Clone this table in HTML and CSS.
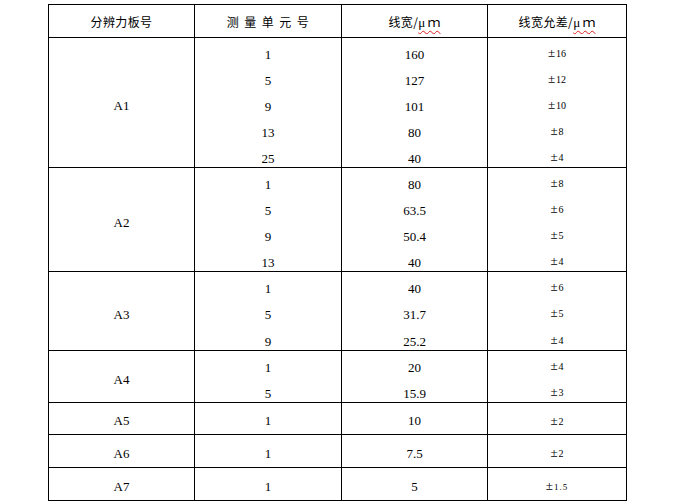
FILE: index.html
```html
<!DOCTYPE html>
<html lang="zh-CN">
<head>
<meta charset="utf-8">
<title>分辨力板线宽</title>
<link rel="stylesheet" href="styles.css">
</head>
<body>
<table class="spec">
  <colgroup>
    <col class="c1"><col class="c2"><col class="c3"><col class="c4">
  </colgroup>
  <thead>
    <tr class="head">
      <th>分辨力板号</th>
      <th class="spaced">测 量 单 元 号</th>
      <th>线宽/<span class="unit">μ ｍ</span></th>
      <th>线宽允差/<span class="unit">μ ｍ</span></th>
    </tr>
  </thead>
  <tbody>
    <tr class="sub first"><td class="board" rowspan="5">A1</td><td>1</td><td>160</td><td class="tol"><span class="pm">±</span>16</td></tr>
    <tr class="sub"><td>5</td><td>127</td><td class="tol"><span class="pm">±</span>12</td></tr>
    <tr class="sub"><td>9</td><td>101</td><td class="tol"><span class="pm">±</span>10</td></tr>
    <tr class="sub"><td>13</td><td>80</td><td class="tol"><span class="pm">±</span>8</td></tr>
    <tr class="sub"><td>25</td><td>40</td><td class="tol"><span class="pm">±</span>4</td></tr>

    <tr class="sub first"><td class="board" rowspan="4">A2</td><td>1</td><td>80</td><td class="tol"><span class="pm">±</span>8</td></tr>
    <tr class="sub"><td>5</td><td>63.5</td><td class="tol"><span class="pm">±</span>6</td></tr>
    <tr class="sub"><td>9</td><td>50.4</td><td class="tol"><span class="pm">±</span>5</td></tr>
    <tr class="sub"><td>13</td><td>40</td><td class="tol"><span class="pm">±</span>4</td></tr>

    <tr class="sub first"><td class="board" rowspan="3">A3</td><td>1</td><td>40</td><td class="tol"><span class="pm">±</span>6</td></tr>
    <tr class="sub tall"><td>5</td><td>31.7</td><td class="tol"><span class="pm">±</span>5</td></tr>
    <tr class="sub"><td>9</td><td>25.2</td><td class="tol"><span class="pm">±</span>4</td></tr>

    <tr class="sub first"><td class="board" rowspan="2">A4</td><td>1</td><td>20</td><td class="tol"><span class="pm">±</span>4</td></tr>
    <tr class="sub"><td>5</td><td>15.9</td><td class="tol"><span class="pm">±</span>3</td></tr>

    <tr class="single first r32"><td class="board">A5</td><td>1</td><td>10</td><td class="tol"><span class="pm">±</span>2</td></tr>
    <tr class="single first"><td class="board">A6</td><td>1</td><td>7.5</td><td class="tol"><span class="pm">±</span>2</td></tr>
    <tr class="single first"><td class="board">A7</td><td>1</td><td>5</td><td class="tol"><span class="pm">±</span><span class="small">1.5</span></td></tr>
  </tbody>
</table>
</body>
</html>
```

FILE: styles.css
```css
html, body {
  margin: 0;
  padding: 0;
  background: #ffffff;
}

body {
  font-family: "Liberation Serif", "Noto Sans CJK SC", serif;
  color: #000;
}

.spec {
  margin: 4px 0 0 48px;
  border: 1px solid #000;
  border-collapse: separate;
  border-spacing: 0;
  table-layout: fixed;
  width: 579px;
}

.spec col.c1 { width: 145px; }
.spec col.c2 { width: 147px; }
.spec col.c3 { width: 146px; }
.spec col.c4 { width: 139px; }

.spec th,
.spec td {
  box-sizing: border-box;
  padding: 0;
  text-align: center;
  vertical-align: middle;
  border: 0;
  border-left: 1px solid #000;
  font-weight: normal;
  white-space: nowrap;
}

.spec th:first-child,
.spec td.board {
  border-left: 0;
}

.head {
  height: 32px;
}

.head th {
  font-family: "Noto Sans CJK SC", sans-serif;
  font-size: 12px;
  line-height: 16px;
  padding-top: 2px;
  letter-spacing: 0.4px;
}

.head th.spaced {
  word-spacing: 2px;
}

.unit {
  font-family: "Liberation Serif", "Noto Sans CJK SC", serif;
  font-size: 13px;
  letter-spacing: 0;
  word-spacing: -1px;
  text-decoration: underline wavy #e02020;
  text-decoration-thickness: 1px;
  text-underline-offset: 3px;
}

.first td {
  border-top: 1px solid #000;
}

.sub {
  height: 26px;
}

.sub.tall {
  height: 27px;
}

.sub td {
  font-size: 13px;
  line-height: 16px;
  padding-top: 9px;
}

.sub td.tol {
  padding-top: 6px;
}

.sub td.board {
  padding-top: 7px;
}

.single {
  height: 33px;
}

.single.r32 {
  height: 32px;
}

.single td {
  font-size: 13px;
  line-height: 16px;
  padding-top: 5px;
}

.spec td.tol {
  font-size: 10px;
}

.pm {
  font-size: 13px;
  margin-right: 1px;
}

.small {
  font-size: 9px;
  letter-spacing: 1px;
}
```
